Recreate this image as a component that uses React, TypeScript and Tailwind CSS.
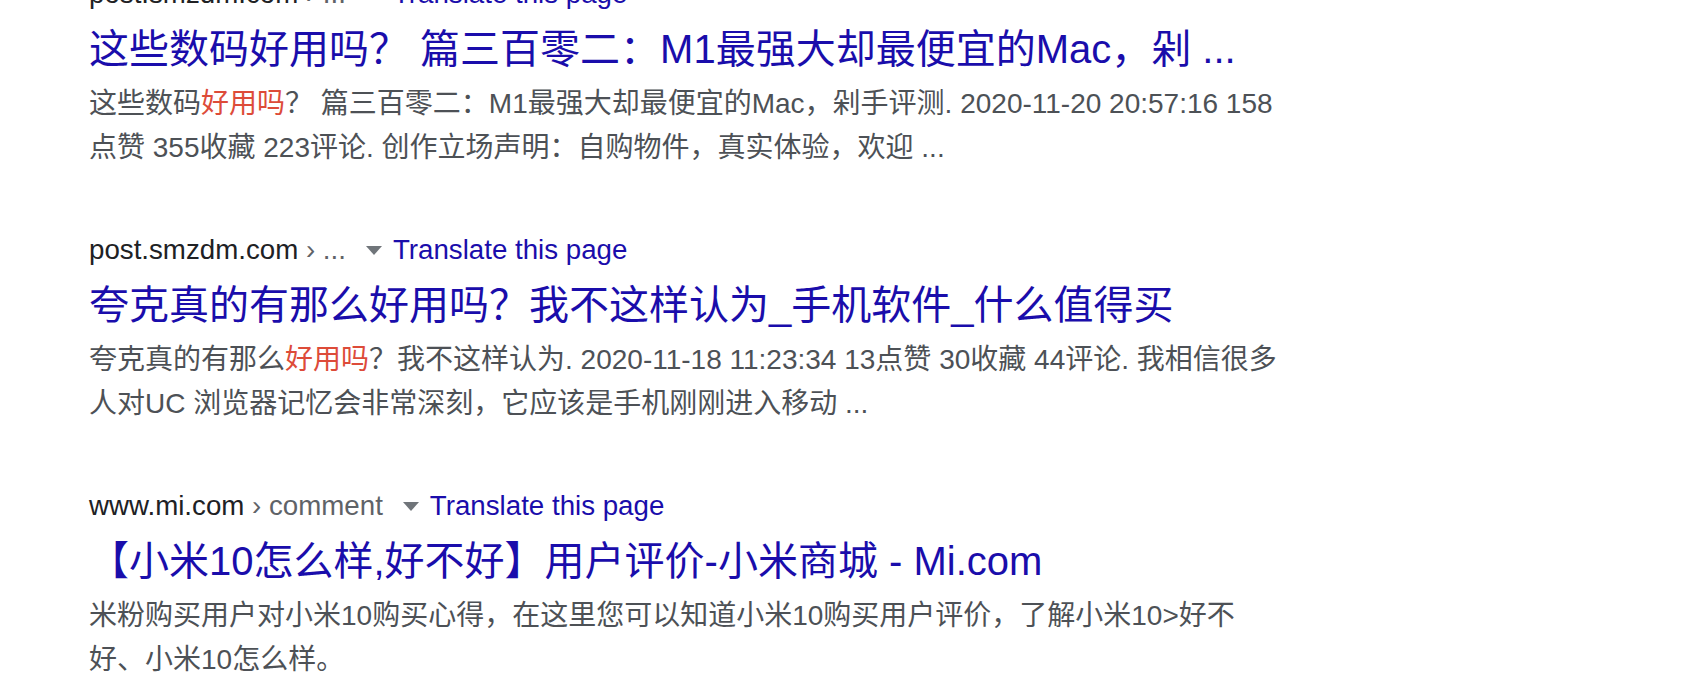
import React from 'react';

type Result = {
  host: string;
  path: string;
  title: string;
  lines: React.ReactNode[];
};

const Em = ({ children }: { children: React.ReactNode }) => (
  <span className="text-[#dd4b39]">{children}</span>
);

const results: Result[] = [
  {
    host: 'post.smzdm.com',
    path: '...',
    title: '这些数码好用吗？ 篇三百零二：M1最强大却最便宜的Mac，剁 ...',
    lines: [
      <>
        这些数码<Em>好用吗</Em>？ 篇三百零二：M1最强大却最便宜的Mac，剁手评测. 2020-11-20 20:57:16 158
      </>,
      <>点赞 355收藏 223评论. 创作立场声明：自购物件，真实体验，欢迎 ...</>,
    ],
  },
  {
    host: 'post.smzdm.com',
    path: '...',
    title: '夸克真的有那么好用吗？我不这样认为_手机软件_什么值得买',
    lines: [
      <>
        夸克真的有那么<Em>好用吗</Em>？我不这样认为. 2020-11-18 11:23:34 13点赞 30收藏 44评论. 我相信很多
      </>,
      <>人对UC 浏览器记忆会非常深刻，它应该是手机刚刚进入移动 ...</>,
    ],
  },
  {
    host: 'www.mi.com',
    path: 'comment',
    title: '【小米10怎么样,好不好】用户评价-小米商城 - Mi.com',
    lines: [
      <>米粉购买用户对小米10购买心得，在这里您可以知道小米10购买用户评价，了解小米10&gt;好不</>,
      <>好、小米10怎么样。</>,
    ],
  },
];

const ResultItem = ({ r }: { r: Result }) => (
  <div className="mb-[58px]">
    <div className="flex items-center h-[44px] text-[27.7px] leading-[44px] whitespace-nowrap">
      <span className="text-[#202124]">{r.host}</span>
      <span className="text-[#5f6368]">&nbsp;› {r.path}</span>
      <span className="ml-[20px] w-0 h-0 border-l-[8px] border-r-[8px] border-t-[9px] border-l-transparent border-r-transparent border-t-[#70757a]" />
      <span className="ml-[11px] text-[#1a0dab]">Translate this page</span>
    </div>
    <div className="h-[66px] text-[40px] leading-[66px] text-[#1a0dab] whitespace-nowrap">{r.title}</div>
    <div className="text-[28px] leading-[44px] text-[#4d5156]">
      {r.lines.map((l, i) => (
        <div key={i} className="whitespace-nowrap">
          {l}
        </div>
      ))}
    </div>
  </div>
);

export default function App() {
  return (
    <div className="w-[1698px] h-[686px] overflow-hidden bg-white font-['Liberation_Sans','Noto_Sans_CJK_SC',sans-serif]">
      <div className="-mt-[28px] pl-[89px]">
        {results.map((r, i) => (
          <ResultItem key={i} r={r} />
        ))}
      </div>
    </div>
  );
}
